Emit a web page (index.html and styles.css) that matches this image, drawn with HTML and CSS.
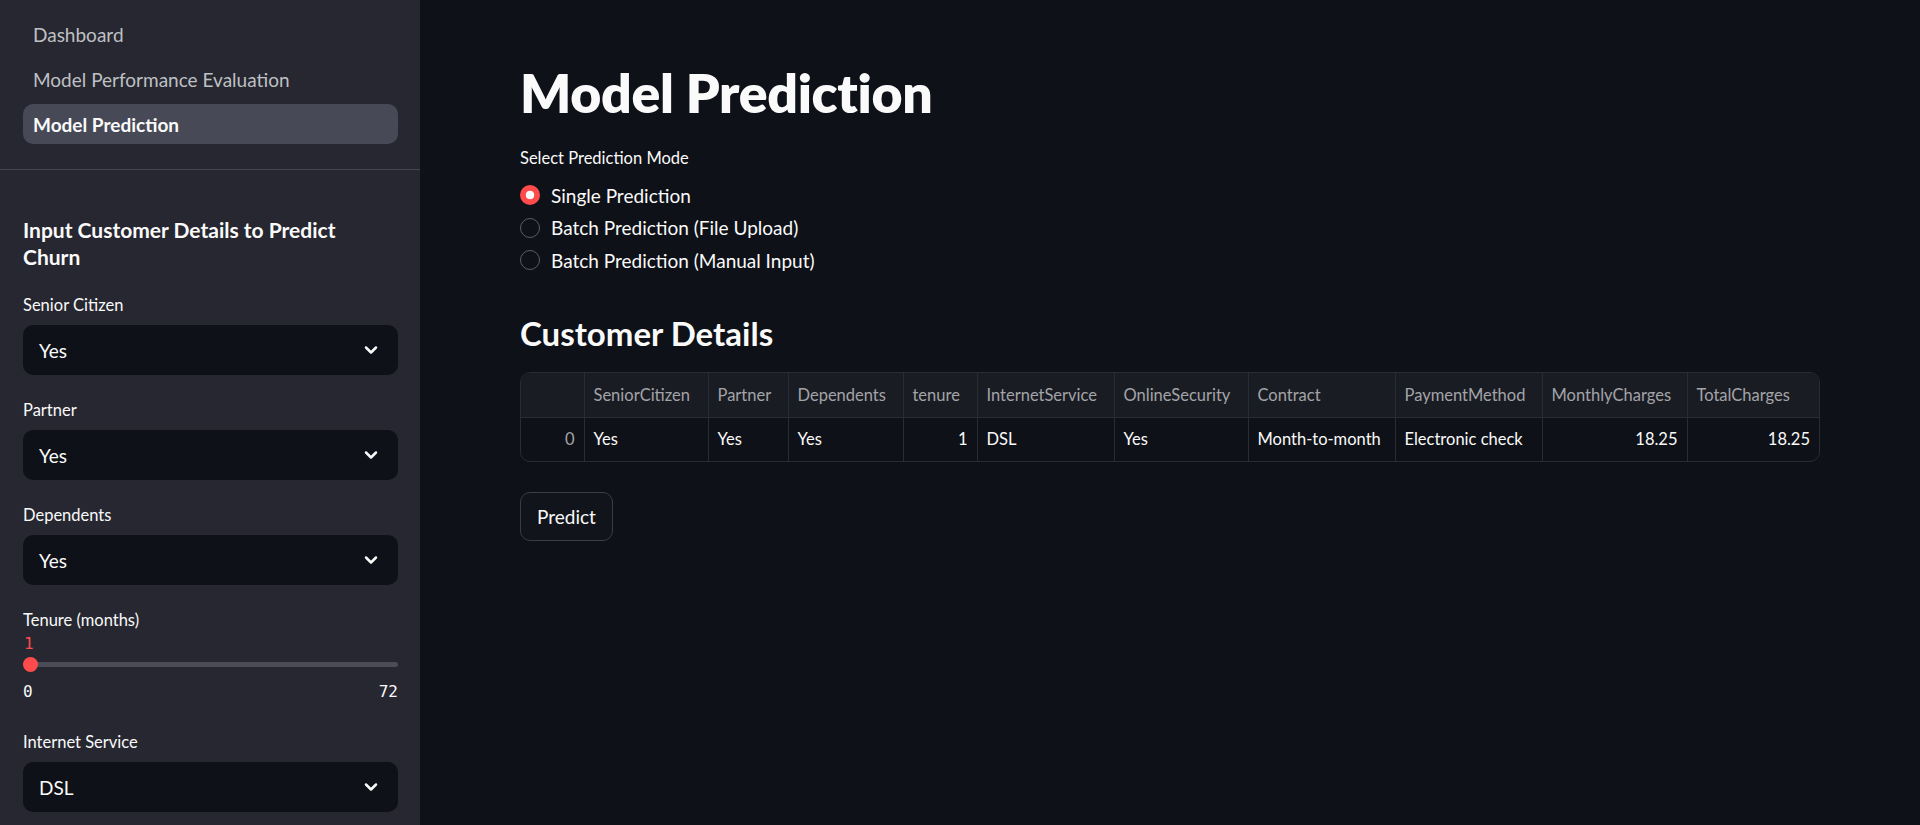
FILE: index.html
```html
<!DOCTYPE html>
<html lang="en">
<head>
<meta charset="utf-8">
<title>Model Prediction</title>
<link rel="stylesheet" href="styles.css">
</head>
<body>
<div class="app">
  <aside class="sidebar">
    <nav class="nav">
      <a class="nav-item">Dashboard</a>
      <a class="nav-item">Model Performance Evaluation</a>
      <a class="nav-item active">Model Prediction</a>
    </nav>
    <div class="sidebar-body">
      <h2 class="side-heading">Input Customer Details to Predict Churn</h2>
      <div class="widget">
        <label class="wlabel">Senior Citizen</label>
        <div class="select"><span>Yes</span><svg class="chev" viewBox="0 0 24 24"><path d="M6 9l6 6 6-6"/></svg></div>
      </div>
      <div class="widget">
        <label class="wlabel">Partner</label>
        <div class="select"><span>Yes</span><svg class="chev" viewBox="0 0 24 24"><path d="M6 9l6 6 6-6"/></svg></div>
      </div>
      <div class="widget">
        <label class="wlabel">Dependents</label>
        <div class="select"><span>Yes</span><svg class="chev" viewBox="0 0 24 24"><path d="M6 9l6 6 6-6"/></svg></div>
      </div>
      <div class="widget slider-widget">
        <label class="wlabel">Tenure (months)</label>
        <div class="slider-value">1</div>
        <div class="track"><div class="thumb"></div></div>
        <div class="slider-range"><span>0</span><span>72</span></div>
      </div>
      <div class="widget">
        <label class="wlabel">Internet Service</label>
        <div class="select"><span>DSL</span><svg class="chev" viewBox="0 0 24 24"><path d="M6 9l6 6 6-6"/></svg></div>
      </div>
    </div>
  </aside>
  <main class="main">
    <h1 class="title">Model Prediction</h1>
    <div class="radio-label">Select Prediction Mode</div>
    <div class="radios">
      <div class="radio"><span class="dot checked"></span>Single Prediction</div>
      <div class="radio"><span class="dot"></span>Batch Prediction (File Upload)</div>
      <div class="radio"><span class="dot"></span>Batch Prediction (Manual Input)</div>
    </div>
    <h3 class="subheader">Customer Details</h3>
    <div class="table-wrap">
      <table class="df">
        <colgroup>
          <col style="width:63px"><col style="width:124px"><col style="width:80px"><col style="width:115px"><col style="width:74px"><col style="width:137px"><col style="width:134px"><col style="width:147px"><col style="width:147px"><col style="width:145px"><col>
        </colgroup>
        <thead>
          <tr><th></th><th>SeniorCitizen</th><th>Partner</th><th>Dependents</th><th>tenure</th><th>InternetService</th><th>OnlineSecurity</th><th>Contract</th><th>PaymentMethod</th><th>MonthlyCharges</th><th>TotalCharges</th></tr>
        </thead>
        <tbody>
          <tr><td class="idx num">0</td><td>Yes</td><td>Yes</td><td>Yes</td><td class="num">1</td><td>DSL</td><td>Yes</td><td>Month-to-month</td><td>Electronic check</td><td class="num">18.25</td><td class="num">18.25</td></tr>
        </tbody>
      </table>
    </div>
    <button class="btn">Predict</button>
  </main>
</div>
</body>
</html>
```
FILE: styles.css
```css
* { box-sizing: border-box; }
html, body { margin: 0; padding: 0; height: 100%; }
body {
  background: #0e1117;
  color: #fafafa;
  font-family: "Lato", "Noto Sans", sans-serif;
  overflow: hidden;
}
.app { display: flex; height: 825px; }

.sidebar {
  width: 420px;
  flex: 0 0 420px;
  background: #262730;
  height: 825px;
  overflow: hidden;
}
.nav {
  display: flex;
  flex-direction: column;
  gap: 5px;
  padding: 14px 22px 25px 23px;
  border-bottom: 1px solid #45474f;
}
.nav-item {
  height: 40px;
  display: flex;
  align-items: center;
  padding: 0 10px;
  border-radius: 10px;
  font-size: 19px;
  color: #bfc0c4;
}
.nav-item.active {
  background: #474a56;
  color: #fafafa;
  font-weight: 700;
}
.sidebar-body {
  padding: 46px 22px 0 23px;
}
.side-heading {
  max-width: 340px;
  margin: 0 0 24px;
  font-size: 21px;
  line-height: 27px;
  font-weight: 700;
}
.widget { margin-bottom: 24px; }
.wlabel {
  display: block;
  font-size: 16.5px;
  line-height: 22px;
  margin-bottom: 9px;
  color: #fafafa;
}
.select {
  height: 50px;
  background: #0e1117;
  border-radius: 10px;
  display: flex;
  align-items: center;
  justify-content: space-between;
  padding: 0 17px 0 16px;
  font-size: 19px;
}
.chev { width: 20px; height: 20px; fill: none; stroke: #fafafa; stroke-width: 3; stroke-linecap: round; stroke-linejoin: round; }

.slider-widget .wlabel { margin-bottom: 3px; }
.slider-value {
  font-family: "DejaVu Sans Mono", monospace;
  color: #ff4b4b;
  font-size: 16px;
  line-height: 20px;
  padding-left: 1px;
}
.track {
  position: relative;
  height: 5px;
  margin: 8px 0 0;
  background: #4b4c57;
  border-radius: 3px;
}
.thumb {
  position: absolute;
  left: 0;
  top: -5px;
  width: 15px;
  height: 15px;
  border-radius: 50%;
  background: #ff4b4b;
}
.slider-range {
  display: flex;
  justify-content: space-between;
  font-family: "DejaVu Sans Mono", monospace;
  font-size: 16px;
  line-height: 20px;
  margin-top: 15px;
  padding-bottom: 5px;
}

.main {
  flex: 1;
  padding: 59px 100px 0 100px;
}
.title {
  margin: 0;
  font-size: 53.5px;
  line-height: 66px;
  font-weight: 800;
  letter-spacing: -0.3px;
}
.radio-label {
  margin-top: 22px;
  font-size: 16.5px;
  line-height: 22px;
}
.radios { margin-top: 10px; display: flex; flex-direction: column; }
.radio {
  height: 32.5px;
  display: flex;
  align-items: center;
  gap: 11px;
  font-size: 19px;
}
.dot {
  width: 20px;
  height: 20px;
  border-radius: 50%;
  border: 1.5px solid #5c5e66;
  background: #0e1117;
  flex: 0 0 20px;
}
.dot.checked {
  border: none;
  background: radial-gradient(circle, #fafafa 0 4px, #ff4b4b 4.6px);
}
.subheader {
  margin: 35px 0 0;
  font-size: 33px;
  line-height: 42px;
  font-weight: 700;
}
.table-wrap {
  margin-top: 18px;
  border: 1px solid #2a2c34;
  border-radius: 10px;
  overflow: hidden;
}
.df {
  width: 100%;
  border-collapse: collapse;
  table-layout: fixed;
  font-size: 16.5px;
}
.df th {
  background: #1a1c23;
  color: #a3a4a8;
  font-weight: 400;
  text-align: left;
  height: 45px;
  padding: 0 9px;
  border-right: 1px solid #2a2c34;
  border-bottom: 1px solid #2a2c34;
  white-space: nowrap;
}
.df td {
  height: 43px;
  padding: 0 9px;
  border-right: 1px solid #2a2c34;
  white-space: nowrap;
}
.df th:last-child, .df td:last-child { border-right: none; }
.df td.num { text-align: right; }
.df td.idx { color: #a3a4a8; }
.btn {
  margin-top: 30px;
  height: 49px;
  padding: 0 16px;
  background: #11141b;
  color: #fafafa;
  border: 1px solid #3b3d45;
  border-radius: 10px;
  font-family: inherit;
  font-size: 19px;
}
```
